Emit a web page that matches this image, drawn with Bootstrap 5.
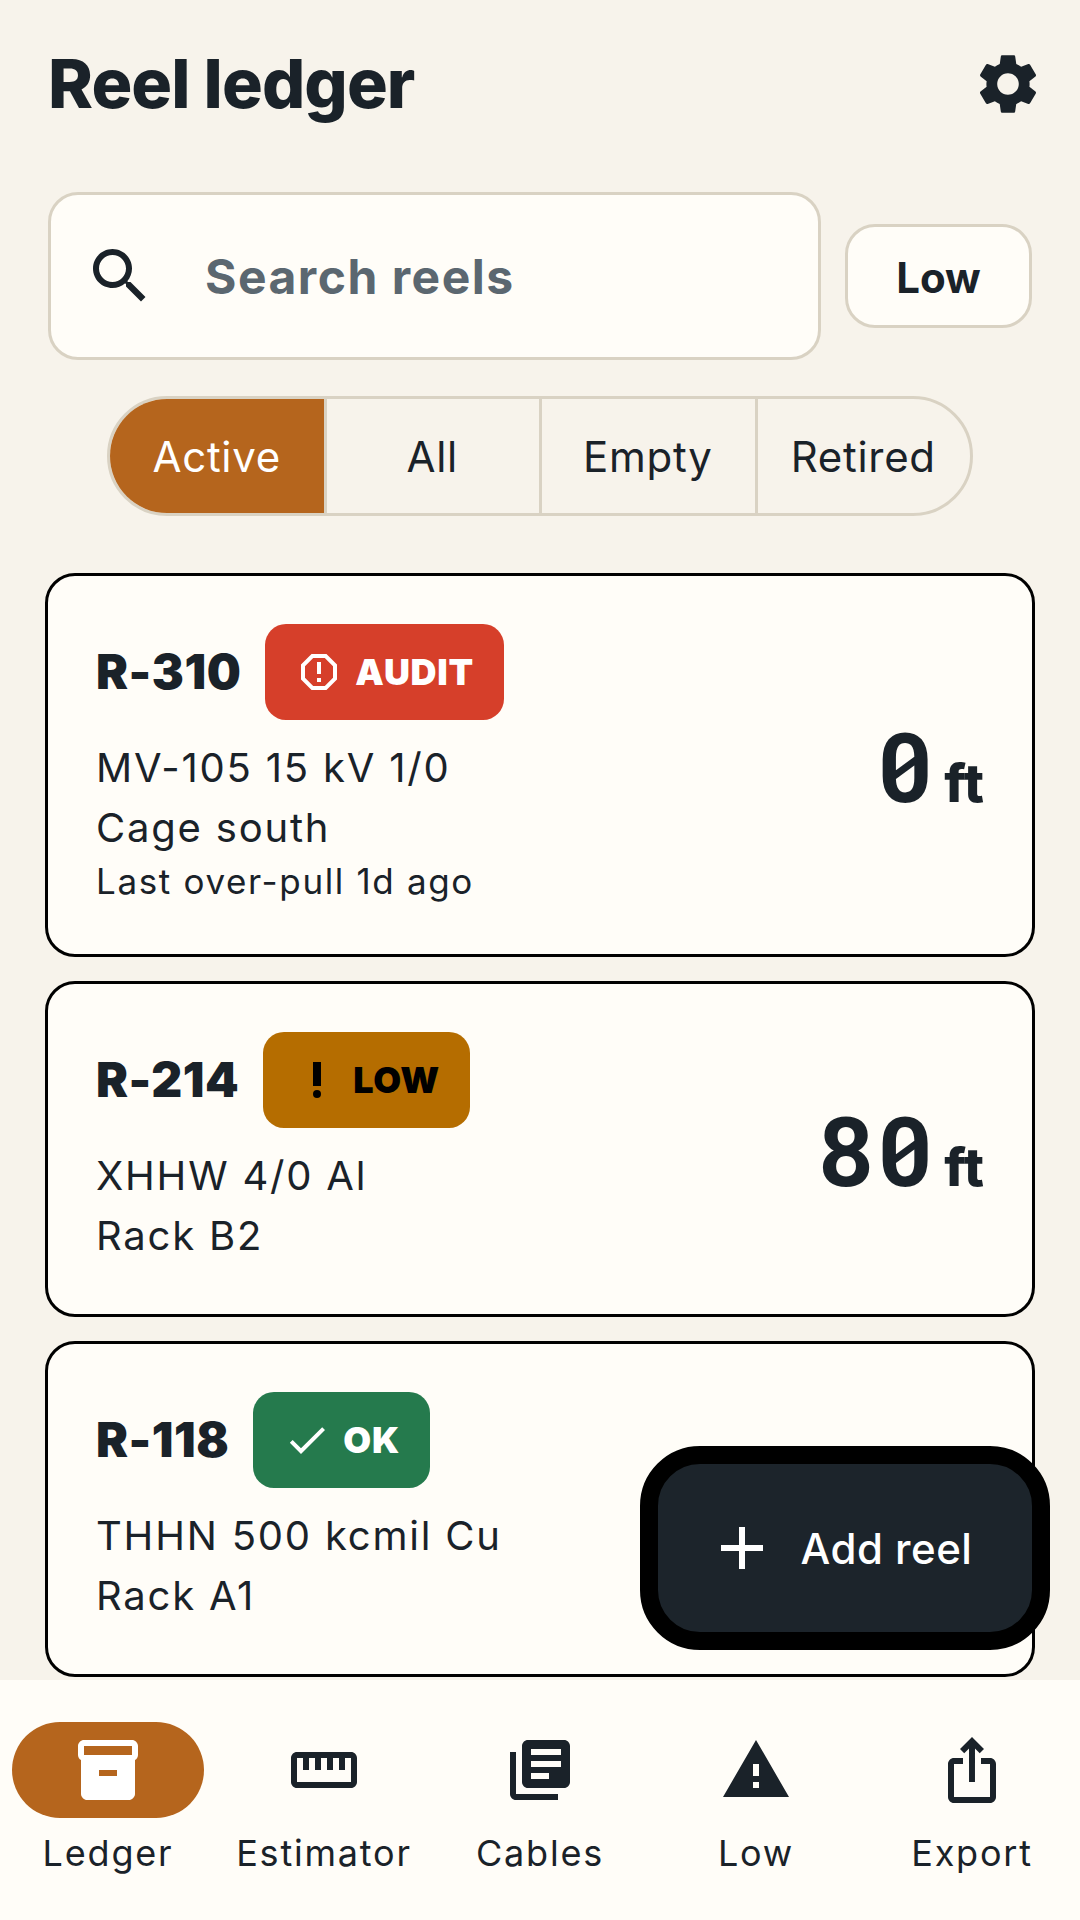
<!DOCTYPE html>
<html lang="en">
<head>
    <meta charset="UTF-8" />
    <meta name="viewport" content="width=device-width, initial-scale=1" />
    <title>Reel ledger</title>
    <link href="https://cdn.jsdelivr.net/npm/bootstrap@5.3.0/dist/css/bootstrap.min.css" rel="stylesheet" />
    <style>
        body {
            width: 1080px;
            height: 1920px;
            overflow: hidden;
            background: #f7f3eb;
            color: #1a2229;
            font-family: Inter, "Liberation Sans", sans-serif;
        }

        svg { fill: currentColor; flex: none; display: block; }

        .app-shell { height: 1920px; position: relative; }
        .app-main { height: 1680px; overflow: hidden; padding: 0 45px; }

        .top-row { height: 168px; padding: 0 0 0 3px; }
        .app-title { font-size: 68px; font-weight: 800; letter-spacing: -0.9px; margin: 0; }
        .gear-icon { width: 72px; height: 72px; margin-right: -9px; }

        .search-row { margin-top: 24px; padding: 0 3px; gap: 24px; }
        .search-box {
            flex: 1;
            height: 168px;
            background: #fffdf8;
            border: 3px solid #d9d2c3;
            border-radius: 30px;
            padding: 0 33px;
            gap: 49px;
        }
        .search-icon { width: 72px; height: 72px; }
        .search-input {
            border: 0;
            background: transparent;
            padding: 2px 0 0;
            font-size: 48px;
            font-weight: 700;
            letter-spacing: 1.5px;
            color: #5b6770;
            box-shadow: none;
        }
        .search-input::placeholder { color: #5b6770; opacity: 1; }
        .low-chip {
            width: 187px;
            height: 104px;
            background: #fffdf8;
            border: 3px solid #d9d2c3;
            border-radius: 30px;
            font-size: 42px;
            font-weight: 700;
            color: #1a2229;
            padding: 2px 0 0;
        }

        .seg-wrap { margin-top: 36px; }
        .seg-group {
            border: 3px solid #d9d2c3;
            border-radius: 60px;
            overflow: hidden;
            height: 120px;
            width: 866px;
        }
        .seg-group .seg-btn {
            flex: 1 1 0;
            border: 0;
            border-right: 3px solid #d9d2c3;
            border-radius: 0;
            background: transparent;
            color: #1a2229;
            font-size: 42px;
            font-weight: 400;
            letter-spacing: 0.7px;
            padding: 0;
        }
        .seg-group .seg-btn:last-child { border-right: 0; }
        .seg-group .seg-on { background: #b5651d; color: #fff; }

        .reel-list { margin-top: 57px; gap: 24px; }
        .reel-card {
            background: #fffdf8;
            border: 3px solid #000;
            border-radius: 30px;
            padding: 48px;
        }
        .reel-head { gap: 24px; margin-bottom: 18px; }
        .reel-id { font-size: 48px; font-weight: 900; line-height: 96px; letter-spacing: 0.5px; }
        .status-tag {
            height: 96px;
            border-radius: 21px;
            padding: 0 30px;
            gap: 12px;
            font-size: 36px;
            font-weight: 900;
            letter-spacing: 0.7px;
            color: #fff;
        }
        .status-tag svg { width: 48px; height: 48px; }
        .tag-audit { background: #d63f2a; }
        .tag-low { background: #b56d00; color: #000; }
        .tag-ok { background: #257a4d; }
        .reel-line { font-size: 40px; line-height: 60px; letter-spacing: 1.8px; }
        .reel-note { font-size: 35px; line-height: 46px; margin-bottom: 2px; letter-spacing: 1.65px; }
        .qty-wrap { margin-top: 10px; }
        .qty {
            font-family: "Roboto Mono", "Noto Sans Mono", "Droid Sans Mono", Inter, monospace;
            font-size: 97px;
            font-weight: 700;
            line-height: 1;
        }
        .qty-unit { font-size: 53px; font-weight: 800; margin-left: 10px; }

        .add-fab {
            position: absolute;
            left: 640px;
            top: 1446px;
            width: 410px;
            height: 204px;
            background: #1c242b;
            border: 18px solid #000;
            border-radius: 60px;
            color: #fff;
            font-size: 42px;
            font-weight: 500;
            letter-spacing: 0.5px;
            gap: 23px;
            padding: 0 12px 0 0;
        }
        .add-fab svg { width: 72px; height: 72px; }
        .add-fab:hover { background: #1c242b; color: #fff; border-color: #000; }

        .tab-bar { height: 240px; background: #fffdf8; }
        .tab-item {
            flex: 1;
            padding-top: 42px;
            font-size: 36px;
            letter-spacing: 1.8px;
            color: #1a2229;
            text-decoration: none;
        }
        .tab-pill { width: 192px; height: 96px; border-radius: 48px; }
        .tab-pill svg { width: 72px; height: 72px; }
        .tab-on { background: #b5651d; color: #fff; }
        .tab-label { margin-top: 5px; line-height: 60px; }
    </style>
</head>
<body>
    <div class="app-shell">
        <div class="app-main">
            <div class="top-row d-flex align-items-center justify-content-between">
                <h1 class="app-title">Reel ledger</h1>
                <svg class="gear-icon" viewBox="0 0 24 24"><path d="M19.14 12.94c.04-.3.06-.61.06-.94 0-.32-.02-.64-.07-.94l2.03-1.58c.18-.14.23-.41.12-.61l-1.92-3.32c-.12-.22-.37-.29-.59-.22l-2.39.96c-.5-.38-1.03-.7-1.62-.94l-.36-2.54c-.04-.24-.24-.41-.48-.41h-3.84c-.24 0-.43.17-.47.41l-.36 2.54c-.59.24-1.13.57-1.62.94l-2.39-.96c-.22-.08-.47 0-.59.22L2.74 8.87c-.12.21-.08.47.12.61l2.03 1.58c-.05.3-.09.63-.09.94s.02.64.07.94l-2.03 1.58c-.18.14-.23.41-.12.61l1.92 3.32c.12.22.37.29.59.22l2.39-.96c.5.38 1.03.7 1.62.94l.36 2.54c.05.24.24.41.48.41h3.84c.24 0 .44-.17.47-.41l.36-2.54c.59-.24 1.13-.56 1.62-.94l2.39.96c.22.08.47 0 .59-.22l1.92-3.32c.12-.22.07-.47-.12-.61l-2.01-1.58zM12 15.6c-1.98 0-3.6-1.62-3.6-3.6s1.62-3.6 3.6-3.6 3.6 1.62 3.6 3.6-1.62 3.6-3.6 3.6z"/></svg>
            </div>

            <div class="search-row d-flex align-items-center">
                <div class="search-box d-flex align-items-center">
                    <svg class="search-icon" viewBox="0 0 24 24"><path d="M15.5 14h-.79l-.28-.27C15.41 12.59 16 11.11 16 9.5 16 5.91 13.09 3 9.5 3S3 5.91 3 9.5 5.91 16 9.5 16c1.61 0 3.09-.59 4.23-1.57l.27.28v.79l5 4.99L20.49 19l-4.99-5zm-6 0C7.01 14 5 11.99 5 9.5S7.01 5 9.5 5 14 7.01 14 9.5 11.99 14 9.5 14z"/></svg>
                    <input class="search-input form-control" type="text" placeholder="Search reels" />
                </div>
                <button class="low-chip btn" type="button">Low</button>
            </div>

            <div class="seg-wrap d-flex justify-content-center">
                <div class="seg-group btn-group">
                    <button class="seg-btn seg-on btn" type="button">Active</button>
                    <button class="seg-btn btn" type="button">All</button>
                    <button class="seg-btn btn" type="button">Empty</button>
                    <button class="seg-btn btn" type="button">Retired</button>
                </div>
            </div>

            <div class="reel-list d-flex flex-column">
                <div class="reel-card d-flex align-items-center justify-content-between">
                    <div>
                        <div class="reel-head d-flex align-items-center">
                            <span class="reel-id">R-310</span>
                            <span class="status-tag tag-audit d-flex align-items-center">
                                <svg viewBox="0 0 24 24"><path d="M15.73 3H8.27L3 8.27v7.46L8.27 21h7.46L21 15.73V8.27L15.73 3zM19 14.9L14.9 19H9.1L5 14.9V9.1L9.1 5h5.8L19 9.1v5.8z"/><path d="M11 15h2v2h-2zM11 7h2v6h-2z"/></svg>
                                AUDIT
                            </span>
                        </div>
                        <div class="reel-line">MV-105 15 kV 1/0</div>
                        <div class="reel-line">Cage south</div>
                        <div class="reel-note">Last over-pull 1d ago</div>
                    </div>
                    <div class="qty-wrap d-flex align-items-baseline"><span class="qty">0</span><span class="qty-unit">ft</span></div>
                </div>

                <div class="reel-card d-flex align-items-center justify-content-between">
                    <div>
                        <div class="reel-head d-flex align-items-center">
                            <span class="reel-id">R-214</span>
                            <span class="status-tag tag-low d-flex align-items-center">
                                <svg viewBox="0 0 24 24"><circle cx="12" cy="19" r="2"/><path d="M10 3h4v12h-4z"/></svg>
                                LOW
                            </span>
                        </div>
                        <div class="reel-line">XHHW 4/0 Al</div>
                        <div class="reel-line">Rack B2</div>
                    </div>
                    <div class="qty-wrap d-flex align-items-baseline"><span class="qty">80</span><span class="qty-unit">ft</span></div>
                </div>

                <div class="reel-card d-flex align-items-center justify-content-between">
                    <div>
                        <div class="reel-head d-flex align-items-center">
                            <span class="reel-id">R-118</span>
                            <span class="status-tag tag-ok d-flex align-items-center">
                                <svg viewBox="0 0 24 24"><path d="M9 16.17L4.83 12l-1.42 1.41L9 19 21 7l-1.41-1.41z"/></svg>
                                OK
                            </span>
                        </div>
                        <div class="reel-line">THHN 500 kcmil Cu</div>
                        <div class="reel-line">Rack A1</div>
                    </div>
                </div>
            </div>
        </div>

        <button class="add-fab btn d-flex align-items-center justify-content-center" type="button">
            <svg viewBox="0 0 24 24"><path d="M19 13h-6v6h-2v-6H5v-2h6V5h2v6h6v2z"/></svg>
            Add reel
        </button>

        <nav class="tab-bar d-flex">
            <a class="tab-item d-flex flex-column align-items-center" href="#">
                <span class="tab-pill tab-on d-flex align-items-center justify-content-center">
                    <svg viewBox="0 0 24 24"><path d="M20 2H4c-1 0-2 .9-2 2v3.01c0 .72.43 1.34 1 1.69V20c0 1.1 1.1 2 2 2h14c.9 0 2-.9 2-2V8.7c.57-.35 1-.97 1-1.69V4c0-1.1-1-2-2-2zm-5 12H9v-2h6v2zm5-7H4V4l16-.02V7z"/></svg>
                </span>
                <span class="tab-label">Ledger</span>
            </a>
            <a class="tab-item d-flex flex-column align-items-center" href="#">
                <span class="tab-pill d-flex align-items-center justify-content-center">
                    <svg viewBox="0 0 24 24"><path d="M21 6H3c-1.1 0-2 .9-2 2v8c0 1.1.9 2 2 2h18c1.1 0 2-.9 2-2V8c0-1.1-.9-2-2-2zm0 10H3V8h2v4h2V8h2v4h2V8h2v4h2V8h2v4h2V8h2v8z"/></svg>
                </span>
                <span class="tab-label">Estimator</span>
            </a>
            <a class="tab-item d-flex flex-column align-items-center" href="#">
                <span class="tab-pill d-flex align-items-center justify-content-center">
                    <svg viewBox="0 0 24 24"><path d="M4 6H2v14c0 1.1.9 2 2 2h14v-2H4V6zm16-4H8c-1.1 0-2 .9-2 2v12c0 1.1.9 2 2 2h12c1.1 0 2-.9 2-2V4c0-1.1-.9-2-2-2zm-1 9H9V9h10v2zm-4 4H9v-2h6v2zm4-8H9V5h10v2z"/></svg>
                </span>
                <span class="tab-label">Cables</span>
            </a>
            <a class="tab-item d-flex flex-column align-items-center" href="#">
                <span class="tab-pill d-flex align-items-center justify-content-center">
                    <svg viewBox="0 0 24 24"><path d="M1 21h22L12 2 1 21zm12-3h-2v-2h2v2zm0-4h-2v-4h2v4z"/></svg>
                </span>
                <span class="tab-label">Low</span>
            </a>
            <a class="tab-item d-flex flex-column align-items-center" href="#">
                <span class="tab-pill d-flex align-items-center justify-content-center">
                    <svg viewBox="0 0 24 24"><path d="M16 5l-1.42 1.42-1.59-1.59V16h-1.98V4.83L9.42 6.42 8 5l4-4 4 4zm4 5v11c0 1.1-.9 2-2 2H6c-1.11 0-2-.9-2-2V10c0-1.11.89-2 2-2h3v2H6v11h12V10h-3V8h3c1.1 0 2 .89 2 2z"/></svg>
                </span>
                <span class="tab-label">Export</span>
            </a>
        </nav>
    </div>

    <script src="https://cdn.jsdelivr.net/npm/bootstrap@5.3.0/dist/js/bootstrap.bundle.min.js"></script>
</body>
</html>
